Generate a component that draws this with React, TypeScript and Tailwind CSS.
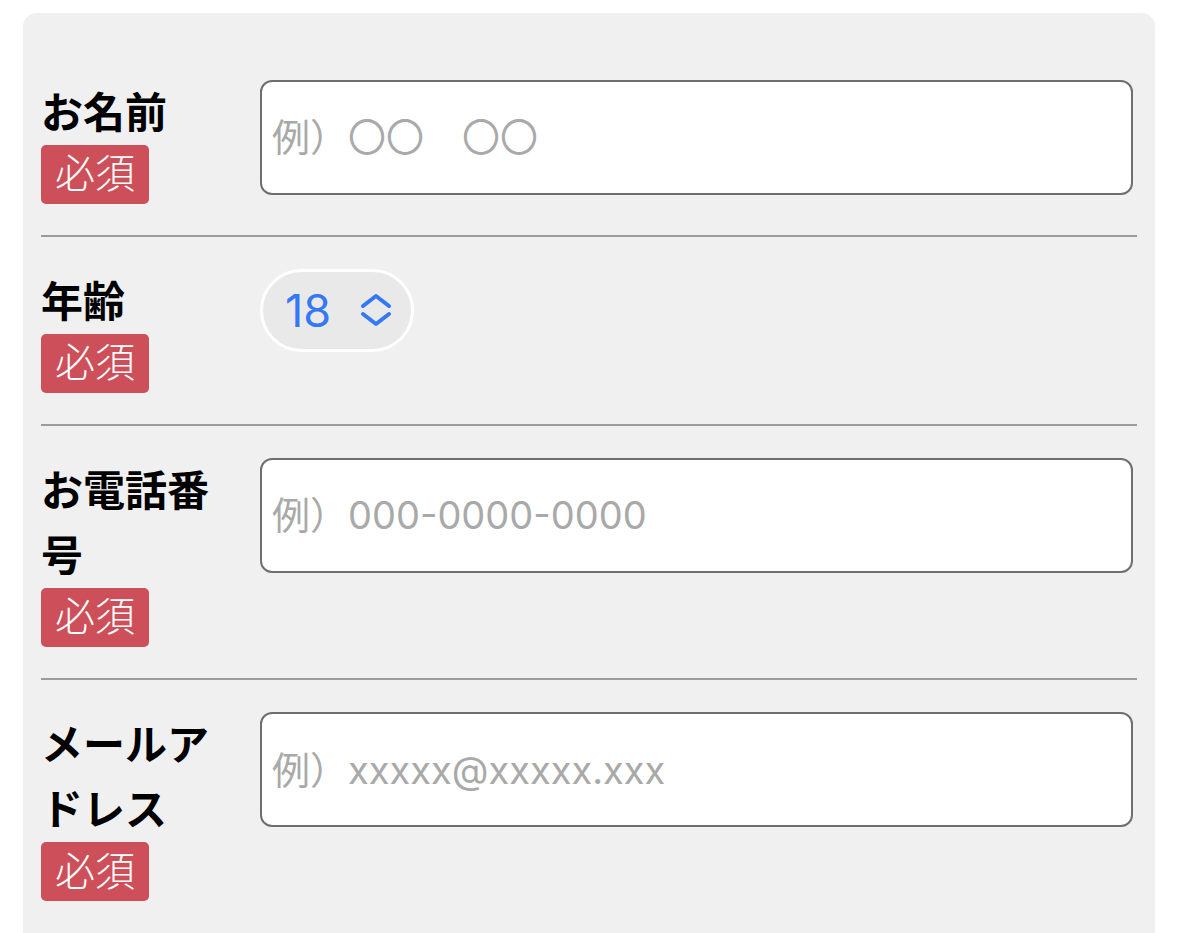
import { ReactNode } from 'react'

const font = { fontFamily: 'Inter, "Noto Sans CJK JP", sans-serif' }

const RequiredBadge = () => (
  <span className="flex h-[59px] w-[108px] items-center justify-center rounded-[5px] bg-[#cd4f5a] text-[40px] font-light leading-none text-white">
    必須
  </span>
)

type FieldRowProps = {
  label: string
  children: ReactNode
  last?: boolean
}

const FieldRow = ({ label, children, last }: FieldRowProps) => (
  <div
    className={
      last
        ? 'flex items-start py-[32px]'
        : 'flex items-start border-b-2 border-[#9b9b9b] py-[31.5px]'
    }
  >
    <div className="flex w-[219px] shrink-0 flex-col items-start">
      <p className="w-[180px] text-[42px] font-bold leading-[65px] text-black">
        {label}
      </p>
      <RequiredBadge />
    </div>
    <div className="flex-1">{children}</div>
  </div>
)

const TextInput = ({ placeholder }: { placeholder: string }) => (
  <input
    type="text"
    placeholder={placeholder}
    style={font}
    className="mr-[4px] block h-[115px] w-[calc(100%-4px)] rounded-[12px] border-2 border-[#6f6f6f] bg-white pl-[10px] text-[38px] text-black outline-none placeholder:text-[#a9a9a9]"
  />
)

const AgeStepper = () => (
  <div className="flex h-[83px] w-[154px] items-center rounded-full border-[3px] border-white bg-[#e9e9e9] pl-[22px]">
    <span className="text-[45px] leading-none text-[#3478f6]">18</span>
    <svg
      className="ml-[29px]"
      width="32"
      height="34"
      viewBox="0 0 32 34"
      fill="none"
      stroke="#3478f6"
      strokeWidth="4"
      strokeLinecap="round"
      strokeLinejoin="round"
    >
      <path d="M3 13 L16 3 L29 13" />
      <path d="M3 21 L16 31 L29 21" />
    </svg>
  </div>
)

export default function App() {
  return (
    <div className="min-h-[933px] bg-white pt-[13px]" style={font}>
      <div className="mx-[23px] w-[1132px] rounded-t-[14px] bg-[#f0f0f0] px-[18px] pt-[35px] pb-[20px]">
        <FieldRow label="お名前">
          <TextInput placeholder="例）〇〇　〇〇" />
        </FieldRow>
        <FieldRow label="年齢">
          <AgeStepper />
        </FieldRow>
        <FieldRow label="お電話番号">
          <TextInput placeholder="例）000-0000-0000" />
        </FieldRow>
        <FieldRow label="メールアドレス" last>
          <TextInput placeholder="例）xxxxx@xxxxx.xxx" />
        </FieldRow>
      </div>
    </div>
  )
}
